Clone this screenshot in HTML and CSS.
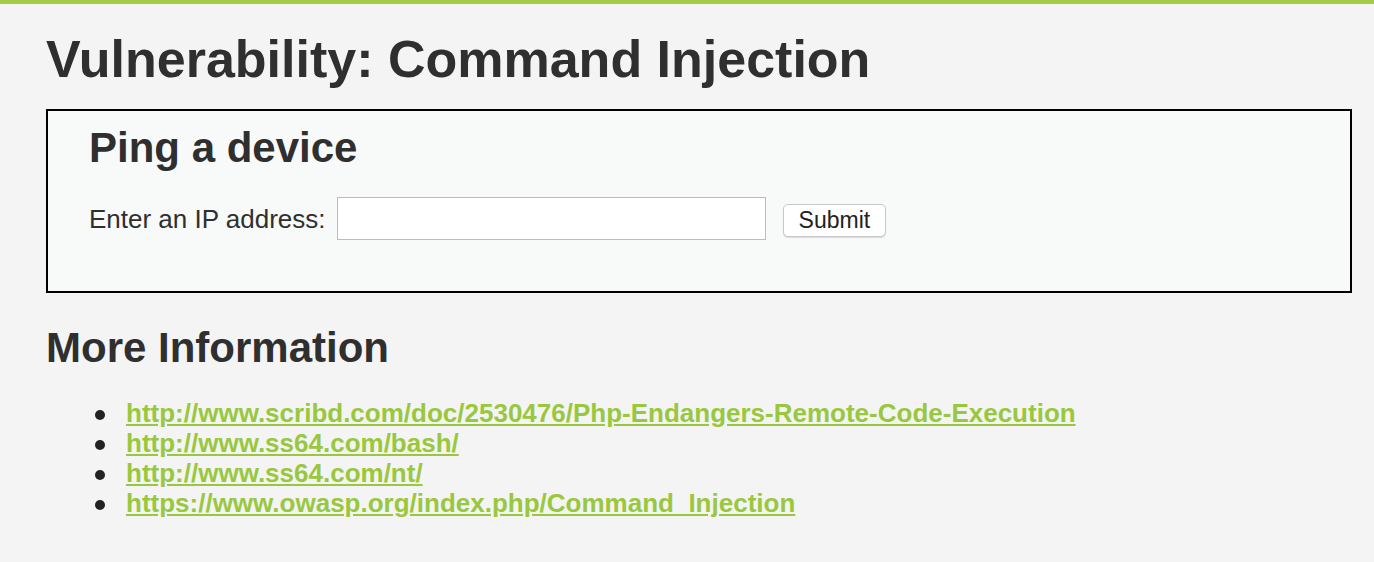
FILE: index.html
```html
<!DOCTYPE html>
<html>
<head>
<meta charset="utf-8">
<link rel="stylesheet" href="styles.css">
</head>
<body>
<div class="topbar"></div>
<div class="body-padded">
  <h1 class="title">Vulnerability: Command Injection</h1>
  <div class="vulnerable-code-area">
    <h2 class="box-title">Ping a device</h2>
    <form class="ping-form">
      <span class="label">Enter an IP address:</span>
      <input type="text" class="ip-input">
      <button type="button" class="submit">Submit</button>
    </form>
  </div>
  <h2 class="info-title">More Information</h2>
  <ul class="links">
    <li><a href="#">http://www.scribd.com/doc/2530476/Php-Endangers-Remote-Code-Execution</a></li>
    <li><a href="#">http://www.ss64.com/bash/</a></li>
    <li><a href="#">http://www.ss64.com/nt/</a></li>
    <li><a href="#">https://www.owasp.org/index.php/Command_Injection</a></li>
  </ul>
</div>
</body>
</html>
```
FILE: styles.css
```css
html, body {
  margin: 0;
  padding: 0;
}
body {
  background: #f4f4f4;
  font-family: "Liberation Sans", Arial, sans-serif;
  color: #2f2f2f;
}
.topbar {
  height: 4px;
  background: #a3cb45;
}
.body-padded {
  padding: 0 22px 0 46px;
}
.title {
  margin: 0;
  padding-top: 25px;
  font-size: 52px;
  line-height: 60px;
  font-weight: bold;
  color: #2f2f2f;
}
.vulnerable-code-area {
  margin-top: 20px;
  border: 2px solid #000;
  background: #f8f9f9;
  padding: 14px 41px 30px;
  height: 184px;
  box-sizing: border-box;
}
.box-title {
  margin: 0;
  font-size: 42px;
  line-height: 46px;
  font-weight: bold;
}
.ping-form {
  display: flex;
  align-items: center;
  margin-top: 26px;
}
.label {
  font-size: 26px;
  line-height: 30px;
}
.ip-input {
  margin: 0 0 0 11px;
  width: 429px;
  height: 43px;
  box-sizing: border-box;
  border: 1px solid #bcbcbc;
  background: #fff;
  padding: 0 6px;
  font-size: 22px;
}
.submit {
  margin: 4px 0 0 17px;
  height: 33px;
  padding: 0 15px;
  border: 1px solid #c8c8c8;
  border-radius: 5px;
  background: #fff;
  font-family: "Liberation Sans", Arial, sans-serif;
  font-size: 23px;
  line-height: 31px;
  color: #222;
  box-shadow: 0 1px 1px rgba(0,0,0,0.12);
}
.info-title {
  margin: 30px 0 0;
  font-size: 42px;
  line-height: 50px;
  font-weight: bold;
}
.links {
  margin: 25px 0 0;
  padding-left: 80px;
  font-size: 26px;
  line-height: 30px;
  list-style: none;
}
.links li::before {
  content: "";
  display: inline-block;
  width: 10px;
  height: 10px;
  border-radius: 50%;
  background: #222;
  margin-left: -31px;
  margin-right: 21px;
  vertical-align: middle;
}
.links a {
  color: #99c83e;
  font-weight: bold;
  text-decoration: underline;
}
```
